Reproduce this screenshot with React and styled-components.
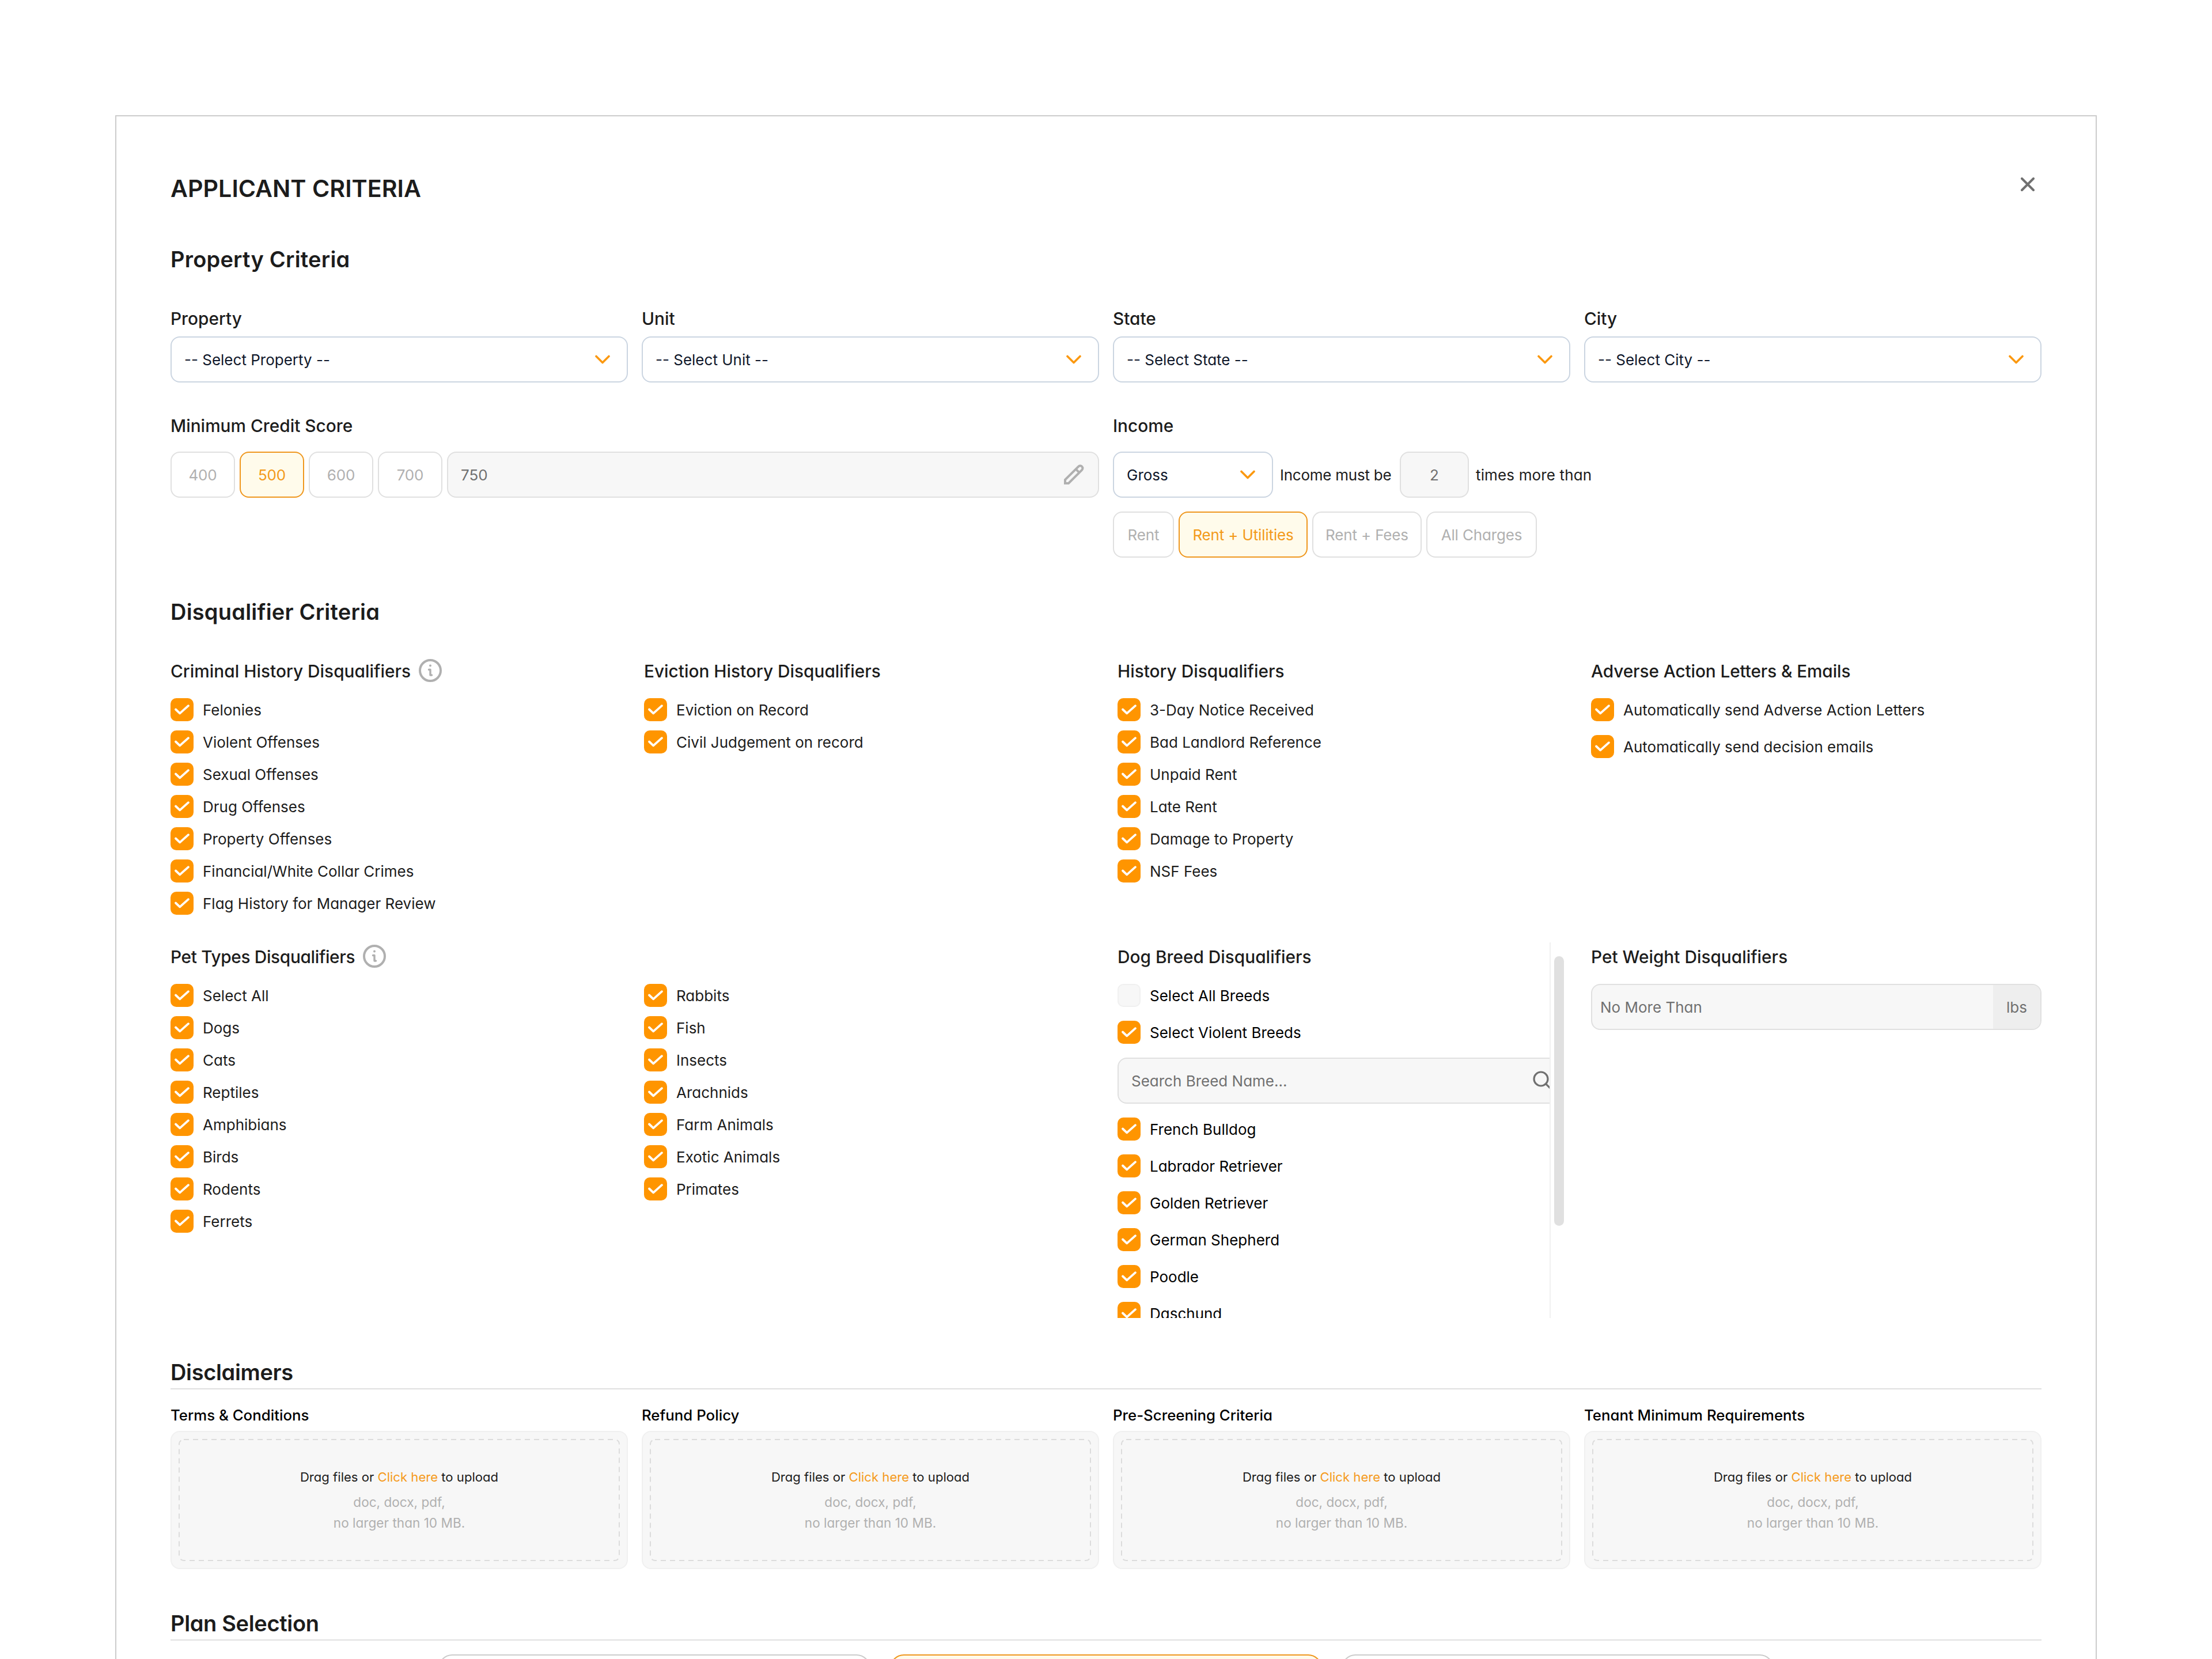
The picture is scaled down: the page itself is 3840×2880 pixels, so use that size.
import React from "react";
import styled, { createGlobalStyle } from "styled-components";

const GlobalStyle = createGlobalStyle`
html {
  box-sizing: border-box;
}
*, *:before, *:after {
  box-sizing: inherit;
}
body {
  margin: 0;
  background: #ffffff;
  color: #1c1c1c;
  font-family: Inter, "Liberation Sans", sans-serif;
  font-size: 26px;
  font-feature-settings: "cv11";
}
`;

const Page = styled.div`
  height: 2880px;
  padding: 200px 200px 0;
  overflow: hidden;
`;

const Panel = styled.div`
  height: 2680px;
  padding: 94px 94px 0;
  border: 2px solid #cccccc;
  border-bottom: 0;
  overflow: hidden;
`;

const Header = styled.header`
  display: flex;
  justify-content: space-between;
  align-items: flex-start;
`;

const Title = styled.h1`
  margin: 0;
  font-size: 41.2px;
  font-weight: 600;
  line-height: 62px;
`;

const CloseButton = styled.button`
  display: flex;
  align-items: center;
  justify-content: center;
  width: 48px;
  height: 48px;
  padding: 0;
  border: 0;
  background: none;
`;

const SectionTitle = styled.h2`
  margin: ${props => props.$space || "70px 0 58px"};
  font-size: 38px;
  font-weight: 600;
  line-height: 48px;
  letter-spacing: 0.2px;
  ${props =>
    props.$ruled &&
    `padding-bottom: 4px;
    border-bottom: 2px solid #e0e0e0;
    letter-spacing: -0.35px;`}
`;

const FieldGrid = styled.div`
  display: grid;
  grid-template-columns: repeat(${props => props.$columns}, 1fr);
  column-gap: 24px;
`;

const ScoreGrid = styled(FieldGrid)`
  margin-top: 56px;
`;

const Label = styled.div`
  margin-bottom: ${props => props.$gap || 12}px;
  font-size: 29.8px;
  font-weight: 500;
  line-height: 38px;
`;

const SelectBox = styled.div`
  display: flex;
  align-items: center;
  justify-content: space-between;
  width: ${props => props.$width || "100%"};
  height: 80px;
  padding: 0 29px 0 22px;
  border: 2px solid #cbd5e1;
  border-radius: 16px;
  color: #0f172a;
`;

const PillRow = styled.div`
  display: flex;
  gap: 8px;
`;

const Pill = styled.button`
  width: ${props => props.$width}px;
  height: 80px;
  padding: 0;
  border: 2px solid #e0e0e0;
  border-radius: 16px;
  background: #ffffff;
  color: #b0b0b0;
  font: inherit;
  font-feature-settings: inherit;
  letter-spacing: -0.15px;
  white-space: nowrap;
  ${props =>
    props.$active &&
    `border-color: #ef971e;
    background: #fffbeb;
    color: #f39a1a;`}
`;

const InputBox = styled.div`
  display: flex;
  flex: 1;
  align-items: center;
  justify-content: space-between;
  height: 80px;
  padding: 0 23px 0 22px;
  border: 2px solid #e0e0e0;
  border-radius: 16px;
  background: #f7f7f7;
  color: #707070;
`;

const MultiplierBox = styled(InputBox)`
  flex: none;
  justify-content: center;
  width: 120px;
  padding: 0;
`;

const IncomeRow = styled.div`
  display: flex;
  align-items: center;
  gap: 12px;
  margin-bottom: 24px;
`;

const IncomeText = styled.span`
  width: ${props => props.$width}px;
  letter-spacing: ${props => props.$tracking || 0}px;
  white-space: nowrap;
`;

const CriteriaGrid = styled.div`
  display: grid;
  grid-template-columns: repeat(4, 782px);
  grid-template-rows: 444px 652px;
  gap: 48px 40px;
`;

const Group = styled.div`
  padding-top: ${props => (props.$lower ? 4 : 0)}px;
`;

const GroupTitle = styled.h3`
  display: flex;
  align-items: center;
  gap: 14px;
  height: 40px;
  margin: 0 0 28px;
  padding-top: 2px;
  font-size: 29.8px;
  font-weight: 500;
  letter-spacing: ${props => props.$tracking || 0}px;

  svg {
    margin-top: -2px;
  }
`;

const CheckList = styled.div`
  display: flex;
  flex-direction: column;
  gap: ${props => props.$gap || 16}px;
`;

const CheckRow = styled.label`
  display: flex;
  align-items: center;
  gap: 16px;
  height: 40px;
  color: ${props => props.$color || "inherit"};
`;

const CheckMark = styled.span`
  display: flex;
  width: 40px;
  height: 40px;
  border-radius: 10px;
  background: #ff9500;
  ${props =>
    !props.$checked &&
    `border: 2px solid #f0f0f0;
    background: #f7f7f7;`}
`;

const BreedPanel = styled.div`
  display: flex;
  height: 652px;
`;

const BreedContent = styled.div`
  width: 750px;
  padding-top: 4px;
  overflow: hidden;
`;

const SearchBox = styled(InputBox)`
  width: 782px;
  margin: 24px 0;
`;

const ScrollTrack = styled.div`
  width: 32px;
  padding: 24px 0 0 6px;
  border-left: 2px solid #f0f0f0;
`;

const ScrollThumb = styled.div`
  width: 17px;
  height: 468px;
  border-radius: 9px;
  background: #e0e0e0;
`;

const WeightBox = styled(InputBox)`
  align-items: stretch;
  padding: 0 0 0 14px;
  line-height: 77px;
  overflow: hidden;
`;

const WeightUnit = styled.span`
  width: 82px;
  background: #eeeeee;
  text-align: center;
`;

const UploadLabel = styled.div`
  margin: 0 0 11px;
  color: #000000;
  font-size: 25.8px;
  font-weight: 500;
  line-height: 33px;
`;

const DropZone = styled.div`
  position: relative;
  display: flex;
  flex-direction: column;
  align-items: center;
  justify-content: center;
  height: 240px;
  border: 2px solid #f0f0f0;
  border-radius: 16px;
  background: #f7f7f7;
  font-size: 22.1px;
  line-height: 36px;
`;

const DropOutline = styled.svg`
  position: absolute;
  top: 12px;
  left: 12px;
`;

const DropHint = styled.div`
  margin-bottom: 8px;
`;

const ClickHere = styled.span`
  color: #f59a1b;
`;

const DropTypes = styled.div`
  color: #b0b0b0;
  font-size: 22.6px;
  text-align: center;
`;

const PlanRow = styled.div`
  display: flex;
  justify-content: center;
  gap: 34px;
`;

const PlanCard = styled.div`
  width: 750px;
  height: 400px;
  border: 2px solid ${props => (props.$active ? "#ef971e" : "#cccccc")};
  border-radius: 24px;
  background: ${props => (props.$active ? "#fffbeb" : "#ffffff")};
`;

function CloseIcon() {
  return (
    <svg width="24" height="24" fill="none" stroke="#707070" strokeWidth="4" strokeLinecap="round">
      <path d="M2 2l20 20M22 2L2 22" />
    </svg>
  );
}

function Chevron() {
  return (
    <svg width="26" height="16" fill="none" stroke="#fb980f" strokeWidth="3.6" strokeLinecap="round" strokeLinejoin="round">
      <path d="M2 2.5l11 11 11-11" />
    </svg>
  );
}

function PencilIcon() {
  return (
    <svg width="36" height="36" fill="none" stroke="#b0b0b0" strokeWidth="4">
      <path d="M2 33v-6.2L25.2 3.8a4.2 4.2 0 0 1 6 6L8 33z" />
      <path d="M20.6 8.4l6 6" />
    </svg>
  );
}

function InfoIcon() {
  return (
    <svg width="40" height="40" fill="none" stroke="#b0b0b0">
      <circle cx="20" cy="20" r="18" strokeWidth="4" />
      <circle cx="20" cy="11.5" r="2" fill="#b0b0b0" stroke="none" />
      <path d="M17.5 18.5H20v9.5h2.5" strokeWidth="3.4" strokeLinecap="round" strokeLinejoin="round" />
    </svg>
  );
}

function SearchIcon() {
  return (
    <svg width="36" height="36" fill="none" stroke="#707070" strokeWidth="3.2" strokeLinecap="round">
      <circle cx="14" cy="15" r="12" />
      <path d="M22.8 23.8l10 10" />
    </svg>
  );
}

function Check({ text, color, checked = true }) {
  return (
    <CheckRow $color={color}>
      <CheckMark $checked={checked}>
        {checked && (
          <svg width="40" height="40" fill="none" stroke="#ffffff" strokeWidth="3.8" strokeLinecap="round" strokeLinejoin="round">
            <path d="M9 19.5l7.2 6.8L31 13.2" />
          </svg>
        )}
      </CheckMark>
      {text}
    </CheckRow>
  );
}

function CheckGroup({ title, tracking, info, items, gap, lower }) {
  return (
    <Group $lower={lower}>
      <GroupTitle $tracking={tracking}>
        {title}
        {info && <InfoIcon />}
      </GroupTitle>
      <CheckList $gap={gap}>
        {items.map(item => (
          <Check key={item} text={item} />
        ))}
      </CheckList>
    </Group>
  );
}

const selects = ["Property", "Unit", "State", "City"];

const criminal = [
  "Felonies",
  "Violent Offenses",
  "Sexual Offenses",
  "Drug Offenses",
  "Property Offenses",
  "Financial/White Collar Crimes",
  "Flag History for Manager Review"
];

const history = [
  "3-Day Notice Received",
  "Bad Landlord Reference",
  "Unpaid Rent",
  "Late Rent",
  "Damage to Property",
  "NSF Fees"
];

const pets = ["Select All", "Dogs", "Cats", "Reptiles", "Amphibians", "Birds", "Rodents", "Ferrets"];

const morePets = ["Rabbits", "Fish", "Insects", "Arachnids", "Farm Animals", "Exotic Animals", "Primates"];

const breeds = [
  "French Bulldog",
  "Labrador Retriever",
  "Golden Retriever",
  "German Shepherd",
  "Poodle",
  "Daschund"
];

const uploads = [
  "Terms & Conditions",
  "Refund Policy",
  "Pre-Screening Criteria",
  "Tenant Minimum Requirements"
];

function App() {
  return (
    <React.Fragment>
      <GlobalStyle />
      <Page>
        <Panel>
          <Header>
            <Title>APPLICANT CRITERIA</Title>
            <CloseButton aria-label="Close">
              <CloseIcon />
            </CloseButton>
          </Header>

          <SectionTitle $space="68px 0 60px">Property Criteria</SectionTitle>
          <FieldGrid $columns={4}>
            {selects.map(name => (
              <div key={name}>
                <Label>{name}</Label>
                <SelectBox>
                  -- Select {name} --
                  <Chevron />
                </SelectBox>
              </div>
            ))}
          </FieldGrid>
          <ScoreGrid $columns={2}>
            <div>
              <Label $gap={26}>Minimum Credit Score</Label>
              <PillRow>
                <Pill $width={112}>400</Pill>
                <Pill $width={112} $active>500</Pill>
                <Pill $width={112}>600</Pill>
                <Pill $width={112}>700</Pill>
                <InputBox>
                  750
                  <PencilIcon />
                </InputBox>
              </PillRow>
            </div>
            <div>
              <Label $gap={26}>Income</Label>
              <IncomeRow>
                <SelectBox $width="278px">
                  Gross
                  <Chevron />
                </SelectBox>
                <IncomeText $width={196} $tracking={-0.25}>Income must be</IncomeText>
                <MultiplierBox>2</MultiplierBox>
                <IncomeText $width={210} $tracking={0.15}>times more than</IncomeText>
              </IncomeRow>
              <PillRow>
                <Pill $width={106}>Rent</Pill>
                <Pill $width={224} $active>Rent + Utilities</Pill>
                <Pill $width={190}>Rent + Fees</Pill>
                <Pill $width={192}>All Charges</Pill>
              </PillRow>
            </div>
          </ScoreGrid>

          <SectionTitle>Disqualifier Criteria</SectionTitle>
          <CriteriaGrid>
            <CheckGroup title="Criminal History Disqualifiers" tracking={0.02} info items={criminal} />
            <CheckGroup
              title="Eviction History Disqualifiers"
              items={["Eviction on Record", "Civil Judgement on record"]}
            />
            <CheckGroup title="History Disqualifiers" items={history} />
            <CheckGroup
              title="Adverse Action Letters & Emails"
              tracking={-0.12}
              gap={24}
              items={["Automatically send Adverse Action Letters", "Automatically send decision emails"]}
            />
            <CheckGroup title="Pet Types Disqualifiers" tracking={-0.34} info items={pets} lower />
            <CheckGroup items={morePets} lower />
            <BreedPanel>
              <BreedContent>
                <GroupTitle>Dog Breed Disqualifiers</GroupTitle>
                <CheckList $gap={24}>
                  <Check text="Select All Breeds" color="#000000" checked={false} />
                  <Check text="Select Violent Breeds" color="#000000" />
                </CheckList>
                <SearchBox>
                  Search Breed Name...
                  <SearchIcon />
                </SearchBox>
                <CheckList $gap={24}>
                  {breeds.map(breed => (
                    <Check key={breed} text={breed} color="#000000" />
                  ))}
                </CheckList>
              </BreedContent>
              <ScrollTrack>
                <ScrollThumb />
              </ScrollTrack>
            </BreedPanel>
            <Group $lower>
              <GroupTitle>Pet Weight Disqualifiers</GroupTitle>
              <WeightBox>
                No More Than
                <WeightUnit>lbs</WeightUnit>
              </WeightBox>
            </Group>
          </CriteriaGrid>

          <SectionTitle $ruled $space="70px 0 28px">Disclaimers</SectionTitle>
          <FieldGrid $columns={4}>
            {uploads.map(name => (
              <div key={name}>
                <UploadLabel>{name}</UploadLabel>
                <DropZone>
                  <DropOutline width="766" height="212" fill="none" stroke="#dcdcdc" strokeWidth="2" strokeDasharray="9 7">
                    <rect x="1" y="1" width="764" height="210" rx="8" />
                  </DropOutline>
                  <DropHint>
                    Drag files or <ClickHere>Click here</ClickHere> to upload
                  </DropHint>
                  <DropTypes>
                    doc, docx, pdf,
                    <br />
                    no larger than 10 MB.
                  </DropTypes>
                </DropZone>
              </div>
            ))}
          </FieldGrid>

          <SectionTitle $ruled $space="70px 0 24px">Plan Selection</SectionTitle>
          <PlanRow>
            <PlanCard />
            <PlanCard $active />
            <PlanCard />
          </PlanRow>
        </Panel>
      </Page>
    </React.Fragment>
  );
}

export default App;
